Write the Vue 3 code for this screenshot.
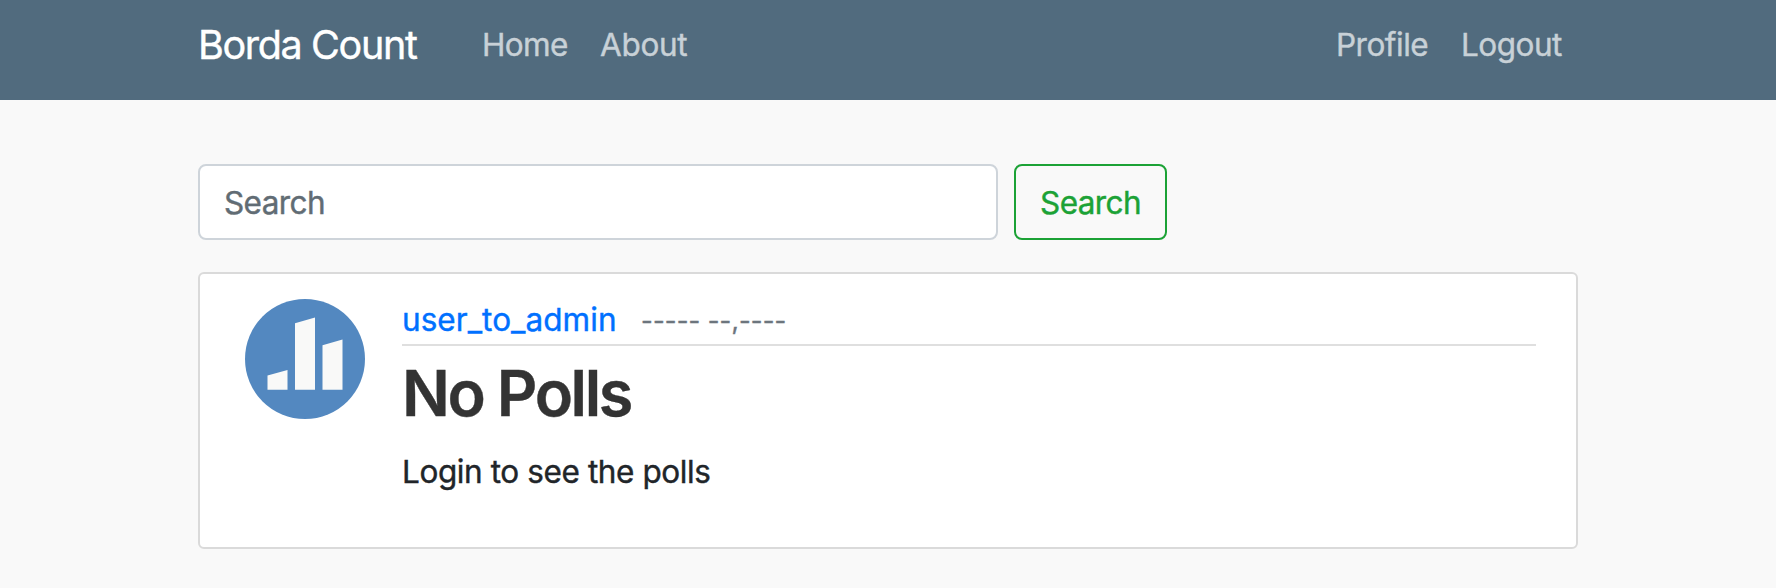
<script setup>
const mainLinks = [
  { label: 'Home', cls: 'home' },
  { label: 'About', cls: 'about' },
]
const userLinks = [
  { label: 'Profile', cls: 'profile' },
  { label: 'Logout', cls: 'logout' },
]
</script>

<template>
  <div class="page">
    <header class="navbar">
      <a class="brand">Borda Count</a>
      <nav class="links">
        <a v-for="l in mainLinks" :key="l.label" :class="l.cls">{{ l.label }}</a>
      </nav>
      <nav class="links right">
        <a v-for="l in userLinks" :key="l.label" :class="l.cls">{{ l.label }}</a>
      </nav>
    </header>
    <main class="container">
      <form class="search" @submit.prevent>
        <input type="text" placeholder="Search" />
        <button type="submit">Search</button>
      </form>
      <article class="card">
        <svg class="avatar" viewBox="0 0 120 120">
          <circle cx="60" cy="60" r="60" fill="#5388c0" />
          <path d="M22.5 76.5 42.5 71V90.7H22.5ZM50 24.3 70 18.5V90.7H50ZM77.5 46.3 97.5 40.5V90.7H77.5Z" fill="#f9f9f8" />
        </svg>
        <div class="body">
          <div class="meta">
            <a class="user">user_to_admin</a>
            <small class="date">----- --,----</small>
          </div>
          <h2>No Polls</h2>
          <p>Login to see the polls</p>
        </div>
      </article>
    </main>
  </div>
</template>

<style>
body {
  margin: 0;
  background: #f9f9f9;
}
</style>

<style scoped>
.page {
  height: 588px;
  overflow: hidden;
  background: #f9f9f9;
  font-family: Inter, "Liberation Sans", sans-serif;
  font-size: 31.5px;
  line-height: 48px;
  color: #212529;
  white-space: nowrap;
  -webkit-text-stroke: 0.4px currentColor;
}
.page * {
  box-sizing: border-box;
}
.navbar {
  display: flex;
  align-items: flex-start;
  height: 100px;
  padding: 21px 198px 0;
  background: #516b7e;
}
.brand {
  width: 284px;
  font-size: 39.5px;
  letter-spacing: -1.35px;
  color: #fff;
}
.links {
  display: flex;
  color: #c8d1d7;
}
.links.right {
  margin-left: auto;
}
.home { width: 118px; letter-spacing: -0.6px; }
.about { letter-spacing: -0.3px; }
.profile { width: 125px; letter-spacing: -0.5px; }
.logout { width: 117px; letter-spacing: -0.5px; }
.container {
  padding: 64px 198px 0;
}
.search {
  display: flex;
  gap: 16px;
  margin-bottom: 32px;
}
.search input,
.search button {
  height: 76px;
  margin: 0;
  font: inherit;
  letter-spacing: -0.6px;
  border: 2px solid #ced4da;
  border-radius: 8px;
  outline: none;
}
.search input {
  width: 800px;
  padding: 0 24px;
  background: #fff;
}
.search input::placeholder {
  color: #616c74;
  opacity: 1;
}
.search button {
  width: 153px;
  padding: 1px 0 0;
  color: #1ca236;
  background: transparent;
  border-color: #1ca236;
}
.card {
  display: flex;
  height: 277px;
  padding: 24px 40px 0 45px;
  background: #fff;
  border: 2px solid #dadada;
  border-radius: 6px;
}
.avatar {
  flex: none;
  width: 120px;
  height: 120px;
  margin: 1px 37px 0 0;
}
.body {
  flex: 1;
}
.meta {
  display: flex;
  height: 48px;
  border-bottom: 2px solid #dfdfdf;
}
.user {
  width: 239px;
  margin-top: -2px;
  color: #0070ff;
  letter-spacing: 0.05px;
}
.date {
  margin-top: -1px;
  font-size: 25.5px;
  letter-spacing: 0.15px;
  color: #6c757d;
}
h2 {
  margin: 9px 0 0;
  font-size: 63px;
  font-weight: 600;
  line-height: 76px;
  letter-spacing: -2.4px;
  color: #333;
}
p {
  margin: 17px 0 0;
  letter-spacing: -0.4px;
}
</style>
